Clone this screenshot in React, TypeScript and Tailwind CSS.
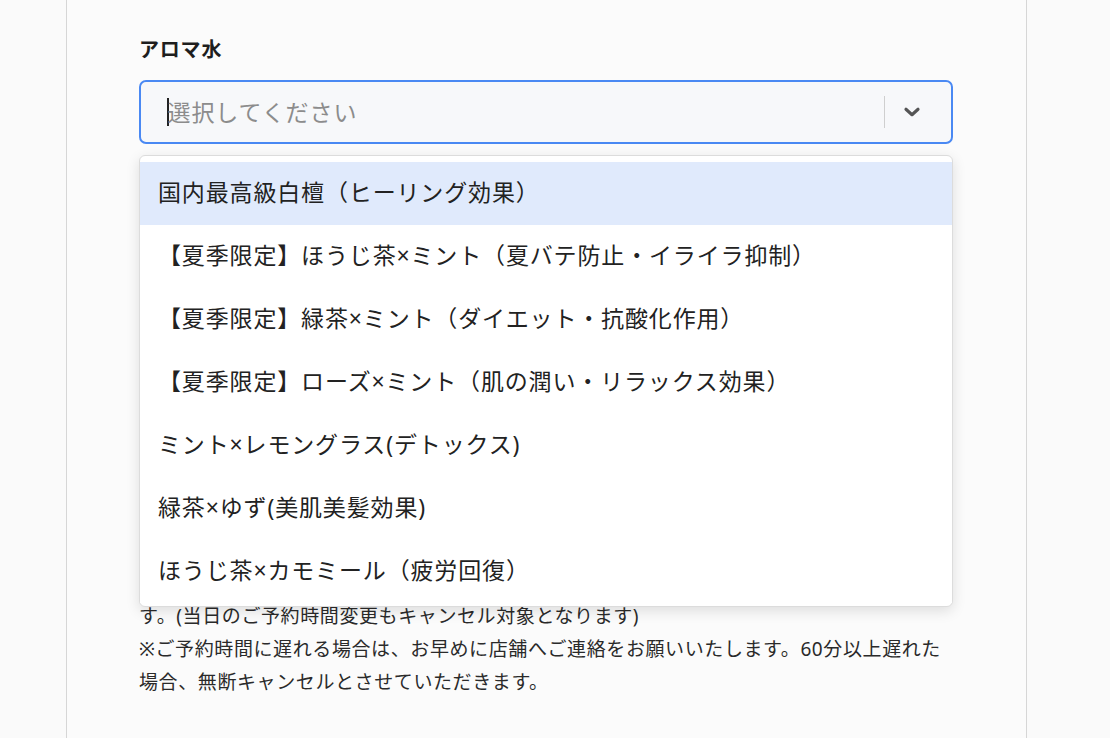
import { useState } from "react";

const options = [
  "国内最高級白檀（ヒーリング効果）",
  "【夏季限定】ほうじ茶×ミント（夏バテ防止・イライラ抑制）",
  "【夏季限定】緑茶×ミント（ダイエット・抗酸化作用）",
  "【夏季限定】ローズ×ミント（肌の潤い・リラックス効果）",
  "ミント×レモングラス(デトックス)",
  "緑茶×ゆず(美肌美髪効果)",
  "ほうじ茶×カモミール（疲労回復）",
];

export default function App() {
  const [active, setActive] = useState(0);

  return (
    <main
      className="min-h-screen bg-[#fafafa] text-[#222]"
      style={{ fontFamily: '"Noto Sans", "Noto Sans CJK JP", sans-serif' }}
    >
      <div className="ml-[66px] w-[961px] min-h-[738px] border-x border-[#d6d6d6] bg-[#fbfbfb] pl-[72px] pr-[73px] pt-[35px]">
        <label className="block text-[20px] leading-[30px] font-bold tracking-[0.8px] text-[#1e1e1e] mb-[15px]">
          アロマ水
        </label>

        <div className="relative">
          <div className="flex items-center h-[64px] rounded-[7px] border-2 border-[#4a89f3] bg-[#f7f8fa] pl-[26px]">
            <div className="flex-1 flex items-center">
              <span className="w-[1.5px] h-[28px] bg-[#222] -mr-[1px]" />
              <span className="text-[23px] text-[#8c8c8c] tracking-[0.9px]">
                選択してください
              </span>
            </div>
            <span className="w-px h-[32px] bg-[#cfcfcf]" />
            <div className="w-[54px] flex items-center justify-center">
              <svg width="22" height="22" viewBox="0 0 20 20" fill="none">
                <path
                  d="M4.5 7.5 L10 12.5 L15.5 7.5"
                  stroke="#555"
                  strokeWidth="2.8"
                  strokeLinecap="round"
                  strokeLinejoin="round"
                />
              </svg>
            </div>
            <div className="w-[12px]" />
          </div>

          <ul className="absolute left-0 right-0 top-[75px] z-10 rounded-[6px] border border-[#dcdcdc] bg-white pt-[6px] pb-[3px] shadow-[0_4px_14px_rgba(0,0,0,0.12)]">
            {options.map((o, i) => (
              <li
                key={o}
                onMouseEnter={() => setActive(i)}
                className={`h-[63px] flex items-center px-[18px] pb-[2px] text-[23px] tracking-[0.85px] text-[#222] ${
                  i === active ? "bg-[#e0eafc]" : "bg-white"
                }`}
              >
                {o}
              </li>
            ))}
          </ul>
        </div>

        <div className="mt-[456px] text-[19px] leading-[33px] text-[#2a2a2a] tracking-[0.6px]">
          <p>す。(当日のご予約時間変更もキャンセル対象となります)</p>
          <p>
            ※ご予約時間に遅れる場合は、お早めに店舗へご連絡をお願いいたします。60分以上遅れた
          </p>
          <p>場合、無断キャンセルとさせていただきます。</p>
        </div>
      </div>
    </main>
  );
}
